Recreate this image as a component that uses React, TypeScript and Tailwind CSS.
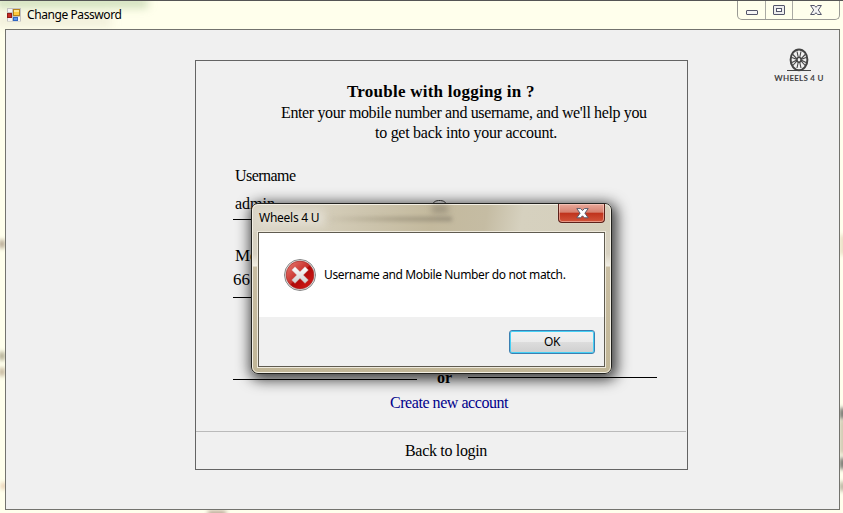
const serif = "font-['Liberation_Serif',serif] whitespace-nowrap";
const sans = "font-['Noto_Sans',sans-serif] whitespace-nowrap text-[12px]";

function AppIcon() {
  return (
    <svg width="14" height="14" viewBox="0 0 14 14" className="mt-[7px] shrink-0">
      <rect x="0" y="0" width="14" height="13.5" fill="#c2c2c2" />
      <path d="M1 1h4v3H1zM1 10h4v3H1zM11 9h2v4h-2z" fill="#f4f4f4" />
      <rect x="6.5" y="1.5" width="6" height="6" fill="#ffcb3d" stroke="#b5831b" />
      <path d="M7 2h5v2H7z" fill="#ffe58f" />
      <rect x="0.5" y="5.5" width="4" height="4" fill="#c92a23" stroke="#8e1d18" />
      <rect x="6.5" y="9.5" width="4" height="3" fill="#5b97f0" stroke="#2f66c0" />
    </svg>
  );
}

function WindowButtons() {
  return (
    <div className="ml-auto mr-[3px] flex h-[19px] w-[103px] rounded-b-[5px] border border-t-0 border-[#9a9a94]">
      <div className="flex w-[28px] justify-center border-r border-[#aaaaa3]">
        <svg width="12" height="6" className="mt-[9px]">
          <rect x="0.5" y="0.5" width="11" height="4" rx="0.5" fill="#f5f5f5" stroke="#54566a" />
        </svg>
      </div>
      <div className="flex w-[27px] justify-center border-r border-[#aaaaa3]">
        <svg width="12" height="10" className="mt-[4px]">
          <rect x="0.5" y="0.5" width="11" height="9" rx="0.5" fill="#eeeeee" stroke="#54566a" />
          <rect x="3.5" y="3.5" width="5" height="3" fill="#fff" stroke="#54566a" />
        </svg>
      </div>
      <div className="flex flex-1 justify-center">
        <svg width="12" height="10" className="mt-[4px]">
          <path d="M.6 .5h3.8L6 2.3 7.6.5h3.8L8.3 5l3.1 4.5H7.6L6 7.7 4.4 9.5H.6L3.7 5z" fill="#f4f4f4" stroke="#54566a" />
        </svg>
      </div>
    </div>
  );
}

function WheelLogo() {
  return (
    <div className="ml-[86px] mt-[18px] flex w-[50px] flex-col items-center">
      <svg width="24" height="24" viewBox="0 0 24 24" fill="none" stroke="#444">
        <ellipse cx="12" cy="11.8" rx="8.4" ry="10.4" strokeWidth="2" />
        <ellipse cx="12" cy="11.8" rx="2" ry="2.4" strokeWidth="1.4" />
        <path d="M11.3 9.5L10 3.5M12.7 9.5L14 3.5M11.3 14L10 20M12.7 14L14 20M10 10.8L5.8 6.5M9.9 11.5L5 9.5M14 10.8L18.2 6.5M14.1 11.5L19 9.5M10 12.8L5.8 17.5M9.9 12L5 14.5M14 12.8L18.2 17.5M14.1 12L19 14.5" strokeWidth="1.1" />
        <path d="M0 22.5h24" strokeWidth="1" />
      </svg>
      <div className="mt-px h-[9px] whitespace-nowrap font-['Lato',sans-serif] text-[8px] font-bold leading-[11px] tracking-[0.25px] text-[#424242]">
        WHEELS 4 U
      </div>
    </div>
  );
}

function ErrorIcon() {
  return (
    <svg width="34" height="34" viewBox="0 0 34 34" className="shrink-0">
      <defs>
        <linearGradient id="red" x1="0" y1="0" x2="1" y2="1">
          <stop offset="0" stopColor="#e98076" />
          <stop offset="0.48" stopColor="#c9312c" />
          <stop offset="0.52" stopColor="#ae0909" />
          <stop offset="1" stopColor="#dc1d1b" />
        </linearGradient>
        <linearGradient id="cross" x1="0" y1="0" x2="0" y2="1">
          <stop offset="0" stopColor="#fff" />
          <stop offset="1" stopColor="#cfcfcf" />
        </linearGradient>
      </defs>
      <circle cx="17" cy="17" r="15.5" fill="#e9e9e9" stroke="#858585" />
      <circle cx="17" cy="17" r="13.9" fill="url(#red)" stroke="#a52b28" strokeWidth="0.7" />
      <path d="M12 8.5L17 13.5 22 8.5 25.5 12 20.5 17 25.5 22 22 25.5 17 20.5 12 25.5 8.5 22 13.5 17 8.5 12z" fill="url(#cross)" stroke="#b54b48" strokeWidth="0.4" />
    </svg>
  );
}

function MessageBox() {
  return (
    <div className="absolute left-[251px] top-[203px] h-[171px] w-[361px] rounded-[7px] shadow-[2px_3px_14px_3px_rgba(0,0,0,0.75)]">
      <div className="relative flex h-full w-full flex-col overflow-hidden rounded-[7px] border border-[#22221f] bg-[linear-gradient(180deg,#d5cebc_0,#d8d2c2_50px,#f1eee4_62px,#c9bea3_63px,#c1b697_100%)]">
        <div className="absolute inset-x-px top-px h-[27px] bg-[linear-gradient(100deg,#dad5c7_0,#d4cdb9_20%,#c3b99d_50%,#c5bca3_65%,#d6d1bf_75%,#d5cfbc_100%)]" />
        <div className="absolute inset-0 rounded-[6px] border border-[#f3efe4]" />
        <div className="absolute left-[68px] top-[13px] h-[4px] w-[132px] bg-[linear-gradient(90deg,#9c937a00_0,#8f8670_60%,#777062_100%)] opacity-60 blur-[2px]" />
        <div className="absolute left-[180px] top-[1px] h-[8px] w-[16px] bg-[#777062]/50 blur-[3px]" />
        <div className="absolute left-[7px] top-[6px] h-[16px] w-[66px] bg-[#e5e1d6]/80 blur-[4px]" />
        <div className="relative flex h-[28px] shrink-0 justify-between pl-[7px] pr-[6px]">
          <span className={`${sans} mt-[5px] leading-[18px] tracking-[-0.25px]`}>Wheels 4 U</span>
          <div className="flex h-[19px] w-[47px] justify-center rounded-b-[4px] border border-t-0 border-[#5c2119] bg-[linear-gradient(180deg,#e9a99b_0,#d6816f_46%,#bf321b_50%,#d2553b_100%)] shadow-[inset_0_0_0_1px_rgba(255,220,210,0.5),0_0_1px_#fff]">
            <svg width="13" height="11" className="ml-[2px] mt-[4px]">
              <path d="M.8 .6h3.8L6.5 2.6 8.4.6h3.8L8.9 5.2l3.3 4.6H8.4L6.5 7.8 4.6 9.8H.8L4.1 5.2z" fill="#fff" stroke="#585b6c" />
            </svg>
          </div>
        </div>
        <div className="relative mx-[6px] flex h-[135px] flex-col border border-[#5f5b50] bg-[#f0f0f0] shadow-[0_0_0_1px_#eee9db]">
          <div className="flex h-[84px] items-center bg-white pl-[24px]">
            <ErrorIcon />
            <span className={`${sans} ml-[7px] tracking-[-0.37px]`}>Username and Mobile Number do not match.</span>
          </div>
          <div className="flex justify-end pr-[9px] pt-[13px]">
            <button className={`${sans} h-[24px] w-[86px] rounded-[3px] border border-[#3c7fb1] bg-[linear-gradient(180deg,#f2f2f2_0,#ebebeb_48%,#dddddd_50%,#cfcfcf_100%)] text-center leading-[22px] tracking-[-0.3px] shadow-[inset_0_0_0_1px_#46d0f5]`}>
              OK
            </button>
          </div>
        </div>
      </div>
    </div>
  );
}

export default function App() {
  return (
    <div className="relative flex h-[513px] w-[843px] flex-col overflow-hidden bg-[#ffffec] text-black">
      <div className="absolute -left-[4px] -top-[3px] h-[11px] w-[152px] bg-[#7ca568]/35 blur-[4px]" />
      <div className="absolute -left-[4px] top-[16px] h-[10px] w-[115px] bg-[#d8d3bc]/40 blur-[5px]" />
      <div className="absolute -left-px top-[240px] h-[8px] w-[6px] bg-[#94806a]/70 blur-[2px]" />
      <div className="absolute -left-px top-[352px] h-[8px] w-[6px] bg-[#8d866a]/70 blur-[2px]" />
      <div className="absolute -left-px top-[368px] h-[8px] w-[6px] bg-[#a99478]/70 blur-[2px]" />
      <div className="absolute left-px top-[483px] h-[6px] w-[5px] bg-[#d5a580]/60 blur-[2px]" />
      <div className="absolute left-[840px] top-[408px] h-[11px] w-[5px] bg-[#333]/80 blur-[2px]" />
      <div className="absolute left-[840px] top-[420px] h-[34px] w-[5px] bg-[#b8ae94]/80 blur-[2px]" />
      <div className="absolute left-[840px] top-[458px] h-[11px] w-[5px] bg-[#333]/80 blur-[2px]" />
      <div className="absolute left-[840px] top-[482px] h-[9px] w-[5px] bg-[#8a836f]/70 blur-[2px]" />
      <div className="absolute left-[840px] top-[235px] h-[20px] w-[5px] bg-[#d8c4a4]/60 blur-[2px]" />
      <div className="absolute left-[208px] top-[511px] h-[4px] w-[18px] bg-[#8a6a5a]/70 blur-[2px]" />

      <div className="relative flex h-[29px] shrink-0 border-t border-[#555] pl-[7px]">
        <AppIcon />
        <span className={`${sans} ml-[6px] mt-[5px] leading-[18px] tracking-[-0.42px]`}>Change Password</span>
        <WindowButtons />
      </div>

      <main className="relative ml-[5px] flex h-[481px] w-[835px] shrink-0 items-start border border-[#73736e] bg-[#f0f0f0]">
        <section className="ml-[189px] mt-[30px] flex h-[410px] w-[493px] shrink-0 flex-col border border-[#646464]">
          <h1 className={`${serif} ml-[151px] mt-[21px] h-[20px] text-[17px] font-bold leading-[20px] tracking-[0.24px]`}>Trouble with logging in ?</h1>
          <p className={`${serif} ml-[85px] h-[20px] text-[16px] leading-[21px] tracking-[-0.37px]`}>Enter your mobile number and username, and we'll help you</p>
          <p className={`${serif} ml-[179px] h-[20px] text-[16px] leading-[21px] tracking-[-0.27px]`}>to get back into your account.</p>

          <div className="ml-[37px] mt-[23px] h-[55px] w-[220px] border-b border-black pl-[2px]">
            <div className={`${serif} h-[19px] text-[16px] leading-[21px] tracking-[-0.55px]`}>Username</div>
            <div className={`${serif} mt-[9px] h-[20px] text-[16px] leading-[22px]`}>admin</div>
          </div>
          <div className="ml-[37px] mt-[25px] h-[53px] w-[220px] border-b border-black">
            <div className={`${serif} h-[20px] pl-[2px] text-[17px] leading-[21px]`}>Mobile number</div>
            <div className={`${serif} mt-[5px] h-[20px] text-[17px] leading-[20px]`}>66</div>
          </div>

          <div className="ml-[37px] mt-[70px] flex h-[20px]">
            <div className="mt-[11px] h-px w-[184px] bg-black" />
            <span className={`${serif} ml-[20px] w-[16px] text-[16px] font-bold leading-[20px]`}>or</span>
            <div className="ml-[15px] mt-[9px] h-px w-[189px] bg-black" />
          </div>
          <a className={`${serif} ml-[194px] mt-[4px] h-[20px] text-[16px] leading-[21px] tracking-[-0.45px] text-[#00008b]`}>Create new account</a>
          <div className="mr-px mt-[19px] h-px bg-[#bababa]" />
          <a className={`${serif} ml-[209px] mt-[9px] h-[20px] text-[16px] leading-[20px] tracking-[-0.32px]`}>Back to login</a>
        </section>
        <WheelLogo />
      </main>

      <div className="absolute left-[431px] top-[200px] h-[15px] w-[17px] rounded-full border border-[#444]" />
      <MessageBox />
    </div>
  );
}
